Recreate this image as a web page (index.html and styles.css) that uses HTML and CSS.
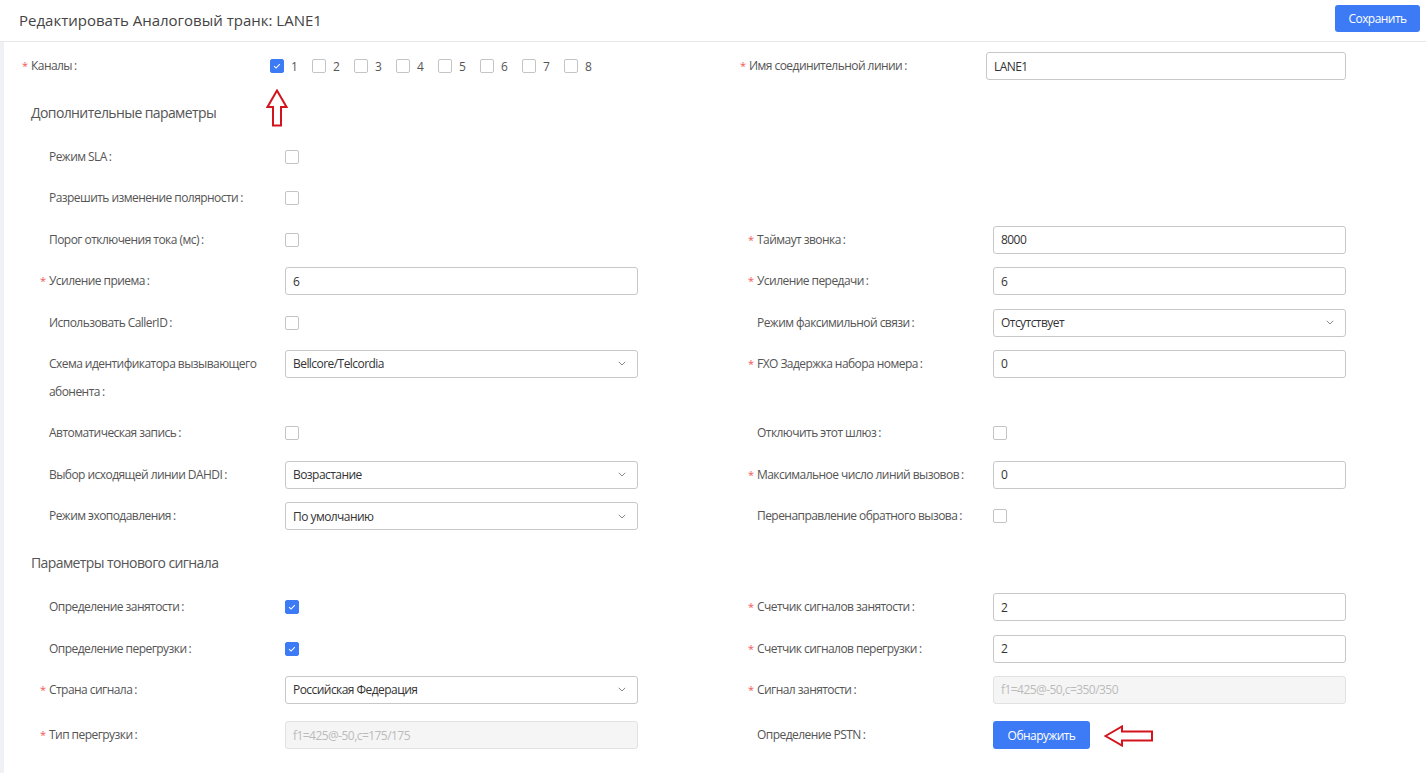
FILE: index.html
```html
<!DOCTYPE html>
<html lang="ru">
<head>
<meta charset="utf-8">
<title>Редактировать Аналоговый транк</title>
<link rel="stylesheet" href="styles.css">
</head>
<body>
<div class="page">
  <header class="topbar">
    <h1 class="title">Редактировать Аналоговый транк: LANE1</h1>
    <button class="btn btn-save">Сохранить</button>
  </header>
  <main class="content">
    <div class="row row-top">
      <div class="field field-channels">
        <label class="lbl req"><span class="star">*</span>Каналы<span class="colon">:</span></label>
        <div class="channels">
          <span class="chk-item"><span class="cb checked"><svg viewBox="0 0 14 14"><path d="M3.6 7.2l2.3 2.2 4.4-4.6" /></svg></span>1</span>
          <span class="chk-item"><span class="cb"></span>2</span>
          <span class="chk-item"><span class="cb"></span>3</span>
          <span class="chk-item"><span class="cb"></span>4</span>
          <span class="chk-item"><span class="cb"></span>5</span>
          <span class="chk-item"><span class="cb"></span>6</span>
          <span class="chk-item"><span class="cb"></span>7</span>
          <span class="chk-item"><span class="cb"></span>8</span>
          <svg class="arrow-up" viewBox="0 0 22 38"><path d="M11 1.5 L20.5 18 L15 18 L15 36.5 L7 36.5 L7 18 L1.5 18 Z"/></svg>
        </div>
      </div>
      <div class="field field-name">
        <label class="lbl req"><span class="star">*</span>Имя соединительной линии<span class="colon">:</span></label>
        <div class="input input-wide">LANE1</div>
      </div>
    </div>

    <section class="section">
      <h2 class="sec-title">Дополнительные параметры</h2>
      <div class="grid">
        <div class="field"><label class="lbl">Режим SLA<span class="colon">:</span></label><div class="ctl"><span class="cb"></span></div></div>
        <div class="field"></div>

        <div class="field"><label class="lbl">Разрешить изменение полярности<span class="colon">:</span></label><div class="ctl"><span class="cb"></span></div></div>
        <div class="field"></div>

        <div class="field"><label class="lbl">Порог отключения тока (мс)<span class="colon">:</span></label><div class="ctl"><span class="cb"></span></div></div>
        <div class="field"><label class="lbl req"><span class="star">*</span>Таймаут звонка<span class="colon">:</span></label><div class="input">8000</div></div>

        <div class="field"><label class="lbl req"><span class="star">*</span>Усиление приема<span class="colon">:</span></label><div class="input">6</div></div>
        <div class="field"><label class="lbl req"><span class="star">*</span>Усиление передачи<span class="colon">:</span></label><div class="input">6</div></div>

        <div class="field"><label class="lbl">Использовать CallerID<span class="colon">:</span></label><div class="ctl"><span class="cb"></span></div></div>
        <div class="field"><label class="lbl">Режим факсимильной связи<span class="colon">:</span></label><div class="input select">Отсутствует<svg class="chev" viewBox="0 0 8 5"><path d="M0.8 0.8L4 4 7.2 0.8"/></svg></div></div>

        <div class="field"><label class="lbl">Схема идентификатора вызывающего абонента<span class="colon">:</span></label><div class="input select">Bellcore/Telcordia<svg class="chev" viewBox="0 0 8 5"><path d="M0.8 0.8L4 4 7.2 0.8"/></svg></div></div>
        <div class="field"><label class="lbl req"><span class="star">*</span>FXO Задержка набора номера<span class="colon">:</span></label><div class="input">0</div></div>

        <div class="field"><label class="lbl">Автоматическая запись<span class="colon">:</span></label><div class="ctl"><span class="cb"></span></div></div>
        <div class="field"><label class="lbl">Отключить этот шлюз<span class="colon">:</span></label><div class="ctl"><span class="cb"></span></div></div>

        <div class="field"><label class="lbl">Выбор исходящей линии DAHDI<span class="colon">:</span></label><div class="input select">Возрастание<svg class="chev" viewBox="0 0 8 5"><path d="M0.8 0.8L4 4 7.2 0.8"/></svg></div></div>
        <div class="field"><label class="lbl req"><span class="star">*</span>Максимальное число линий вызовов<span class="colon">:</span></label><div class="input">0</div></div>

        <div class="field"><label class="lbl">Режим эхоподавления<span class="colon">:</span></label><div class="input select">По умолчанию<svg class="chev" viewBox="0 0 8 5"><path d="M0.8 0.8L4 4 7.2 0.8"/></svg></div></div>
        <div class="field"><label class="lbl">Перенаправление обратного вызова<span class="colon">:</span></label><div class="ctl"><span class="cb"></span></div></div>
      </div>
    </section>

    <section class="section">
      <h2 class="sec-title">Параметры тонового сигнала</h2>
      <div class="grid">
        <div class="field"><label class="lbl">Определение занятости<span class="colon">:</span></label><div class="ctl"><span class="cb checked"><svg viewBox="0 0 14 14"><path d="M3.6 7.2l2.3 2.2 4.4-4.6" /></svg></span></div></div>
        <div class="field"><label class="lbl req"><span class="star">*</span>Счетчик сигналов занятости<span class="colon">:</span></label><div class="input">2</div></div>

        <div class="field"><label class="lbl">Определение перегрузки<span class="colon">:</span></label><div class="ctl"><span class="cb checked"><svg viewBox="0 0 14 14"><path d="M3.6 7.2l2.3 2.2 4.4-4.6" /></svg></span></div></div>
        <div class="field"><label class="lbl req"><span class="star">*</span>Счетчик сигналов перегрузки<span class="colon">:</span></label><div class="input">2</div></div>

        <div class="field"><label class="lbl req"><span class="star">*</span>Страна сигнала<span class="colon">:</span></label><div class="input select">Российская Федерация<svg class="chev" viewBox="0 0 8 5"><path d="M0.8 0.8L4 4 7.2 0.8"/></svg></div></div>
        <div class="field"><label class="lbl req"><span class="star">*</span>Сигнал занятости<span class="colon">:</span></label><div class="input disabled">f1=425@-50,c=350/350</div></div>

        <div class="field last"><label class="lbl req"><span class="star">*</span>Тип перегрузки<span class="colon">:</span></label><div class="input disabled">f1=425@-50,c=175/175</div></div>
        <div class="field last"><label class="lbl">Определение PSTN<span class="colon">:</span></label><div class="ctl ctl-btn"><button class="btn btn-detect">Обнаружить</button><svg class="arrow-left" viewBox="0 0 50 22"><path d="M1.5 11 L18 1.5 L18 6.5 L48 6.5 L48 15.5 L18 15.5 L18 20.5 Z"/></svg></div></div>
      </div>
    </section>
  </main>
</div>
</body>
</html>
```

FILE: styles.css
```css
* { box-sizing: border-box; }
html, body { margin: 0; padding: 0; background: #fff; }
body {
  font-family: "Open Sans", "Noto Sans", "Liberation Sans", sans-serif;
  color: #555;
  font-size: 12px;
  letter-spacing: -0.55px;
  overflow: hidden;
}
.page { width: 1426px; height: 773px; }

.topbar {
  height: 42px;
  display: flex;
  align-items: center;
  justify-content: space-between;
  padding: 0 6px 0 19px;
  border-bottom: 1px solid #e8e8e8;
}
.title {
  margin: 0;
  font-size: 15px;
  font-weight: 400;
  color: #444;
  letter-spacing: 0;
  line-height: 20px;
  padding-bottom: 2px;
}
.btn {
  font-family: inherit;
  letter-spacing: -0.55px;
  border: none;
  background: #3d7bf6;
  color: #fff;
  border-radius: 3px;
  cursor: pointer;
}
.btn-save {
  width: 85px;
  height: 27px;
  font-size: 12px;
  margin-top: -4px;
}

.content {
  border-left: 4px solid #eff1f5;
  padding: 10px 0 0 18px;
  height: 731px;
}

.row { display: flex; }
.row-top { height: 28px; }
.field { display: flex; align-items: flex-start; }
.field-channels { width: 718px; }
.field-channels .lbl { width: 248px; padding-left: 0; }
.field-name .lbl { width: 246px; }
.channels {
  display: flex;
  align-items: center;
  height: 28px;
  position: relative;
}
.chk-item {
  display: flex;
  align-items: center;
  width: 42px;
  color: #555;
  font-size: 12px;
}
.chk-item .cb { margin-right: 7px; }

.lbl {
  display: block;
  width: 245px;
  line-height: 28px;
  padding-left: 9px;
  padding-right: 10px;
  color: #555;
  font-size: 12px;
  flex: none;
}
.lbl.req { padding-left: 0; }
.star {
  display: inline-block;
  width: 9px;
  color: #f0585a;
  font-size: 11px;
}
.colon { margin-left: 2px; }

.ctl {
  height: 28px;
  display: flex;
  align-items: center;
}
.cb {
  display: inline-block;
  width: 14px;
  height: 14px;
  border: 1px solid #c4c4c4;
  border-radius: 2px;
  background: #fff;
  flex: none;
}
.cb.checked {
  background: #3d7bf6;
  border-color: #3d7bf6;
}
.cb svg { display: block; width: 12px; height: 12px; }
.cb svg path { fill: none; stroke: #fff; stroke-width: 1.2; }

.input {
  width: 353px;
  height: 28px;
  border: 1px solid #c8c8c8;
  border-radius: 3px;
  padding: 0 7px;
  display: flex;
  align-items: center;
  color: #333;
  font-size: 12px;
  background: #fff;
  flex: none;
}
.input-wide { width: 360px; }
.input.disabled {
  background: #f5f5f5;
  border-color: #e2e2e2;
  color: #bbb;
}
.select { justify-content: space-between; padding-right: 11px; }
.chev { width: 8px; height: 5px; }
.chev path { fill: none; stroke: #888; stroke-width: 1; }

.section { padding: 23px 0 0 9px; }
.sec-title {
  margin: 0 0 20px;
  font-size: 14px;
  line-height: 20px;
  font-weight: 400;
  letter-spacing: -0.6px;
  color: #555;
}
.grid {
  display: grid;
  grid-template-columns: 708px 598px;
  row-gap: 13.4px;
  padding-left: 9px;
}
.field.last { margin-top: 4px; }

.btn-detect {
  width: 97px;
  height: 28px;
  font-size: 12px;
}
.ctl-btn { position: relative; }

.arrow-up {
  position: absolute;
  left: -4px;
  top: 37px;
  width: 22px;
  height: 38px;
}
.arrow-up path, .arrow-left path {
  fill: #fff;
  stroke: #d4141c;
  stroke-width: 2;
}
.arrow-left {
  position: absolute;
  left: 111px;
  top: 4px;
  width: 50px;
  height: 22px;
}
```
